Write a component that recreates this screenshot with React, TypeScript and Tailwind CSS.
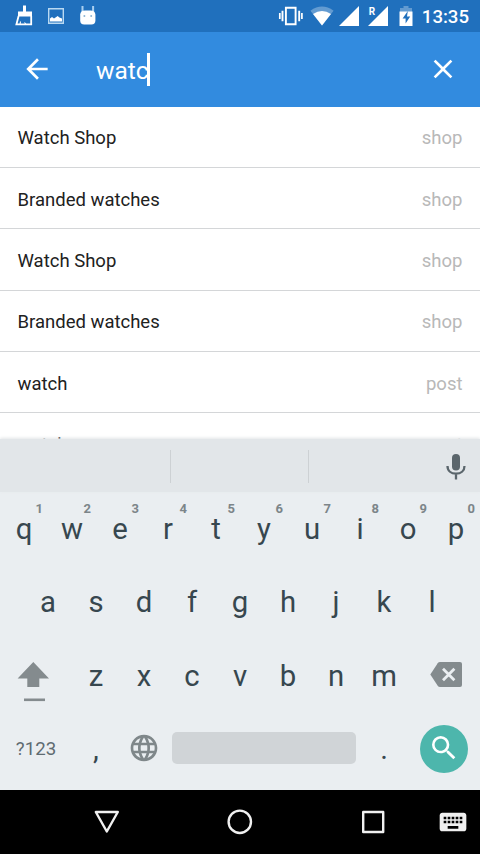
import { MdArrowBack, MdClose, MdKeyboard, MdLanguage, MdSearch } from 'react-icons/md'

const RESULTS = [
  { name: 'Watch Shop', type: 'shop' },
  { name: 'Branded watches', type: 'shop' },
  { name: 'Watch Shop', type: 'shop' },
  { name: 'Branded watches', type: 'shop' },
  { name: 'watch', type: 'post' },
  { name: 'watch', type: 'post' },
]

const TOP_ROW = 'qwertyuiop'.split('')
const HOME_ROW = 'asdfghjkl'.split('')
const BOTTOM_ROW = 'zxcvbnm'.split('')

function StatusBar() {
  return (
    <div className="flex h-8 shrink-0 items-center justify-between bg-[#2070bd] pr-[11px] pl-[14px] text-white">
      <div className="flex items-center">
        {/* Cleaner */}
        <svg width="20" height="22" viewBox="0 0 20 22" fill="none">
          <path d="M9 0.5h3v6h6v5H4v-5h5z" fill="currentColor" />
          <path d="M4.6 11 2.4 19.4h14.8V11" stroke="currentColor" strokeWidth="1.8" />
          <path d="M6 19.5l.5-3M12 19.5l-1.500-2" stroke="currentColor" strokeWidth="1.1" />
        </svg>
        {/* Screenshot */}
        <svg className="ml-[13px]" width="18" height="18" viewBox="0 0 18 18" fill="none">
          <path d="M1.7 1.7h14.6v14.6H1.7z" stroke="#b9d9f2" strokeWidth="1.4" />
          <path d="M3 14.5v-3l2-1.6 2 1.5 1.5-.8 2.2-1.6 1.7 1.6 2.6.9v3z" fill="currentColor" />
        </svg>
        {/* Android head */}
        <svg className="ml-[14px]" width="18" height="20" viewBox="0 0 18 20">
          <path d="M3.5 0v6M14.1 0v6" stroke="#a9cff0" strokeWidth="2" />
          <path d="M1.2 8.500Q1.500 4.500 6 4.500h5.5q4.500 0 4.900 4v6q0 3.800-4 4H5.200q-4-.2-4-4z" fill="currentColor" />
          <circle cx="5.4" cy="10" r="1" fill="#8bb4d4" />
          <circle cx="12.2" cy="10" r="1" fill="#8bb4d4" />
        </svg>
      </div>

      <div className="flex items-center">
        {/* Vibrate */}
        <svg width="26" height="20" viewBox="0 0 26 20" fill="none" stroke="currentColor">
          <path d="M7.9 1.8h9.7v16.4H7.9z" strokeWidth="1.9" />
          <path d="M4.5 4.8v10.4M21.2 4.8v10.4" strokeWidth="1.9" />
          <path d="M1.8 7v6M23.9 7v6" strokeWidth="1.7" />
        </svg>
        {/* Wifi */}
        <svg className="ml-[6px]" width="24" height="20" viewBox="0 0 24 20">
          <path d="M12 19.6.4 4.8Q12-3.6 23.6 4.8z" fill="#fff" fillOpacity=".3" />
          <path d="M12 19.6 3 8Q12 2 21 8z" fill="currentColor" />
        </svg>
        <svg className="ml-[5px]" width="20" height="20" viewBox="0 0 20 20">
          <path d="M20 0v20H0z" fill="currentColor" />
        </svg>
        <div className="relative ml-[9px]">
          <span className="absolute top-[1px] left-[1px] text-[10px] leading-[10px] font-bold">R</span>
          <svg width="20" height="20" viewBox="0 0 20 20">
            <path d="M20 0v20H0L8.5 11.5z" fill="currentColor" />
          </svg>
        </div>
        {/* Battery */}
        <svg className="ml-[11px]" width="14" height="20" viewBox="0 0 14 20">
          <path d="M4.5 0h5v2H13v4H1V2h3.5z" fill="#fff" fillOpacity=".3" />
          <path d="M.5 5.5h13V20H.5z" fill="currentColor" />
          <path d="M8.8 5 3.6 12.4h3v5.2l4.6-7.2H8z" fill="#2070bd" />
        </svg>
        <span className="ml-[9px] pt-[2px] text-[18.6px] leading-[30px] font-medium">13:35</span>
      </div>
    </div>
  )
}

function SearchBar() {
  return (
    <header className="flex h-[74.5px] shrink-0 items-center bg-[#328bdf] px-[21px] text-white">
      <MdArrowBack size={32} />
      <div className="ml-[43px] flex flex-1 items-center">
        <span className="pt-[3px] text-[24.5px] leading-8">watc</span>
        <span className="-ml-[2px] h-[33px] w-[3px] bg-white" />
      </div>
      <MdClose size={32} />
    </header>
  )
}

function Letter({ children, hint }: { children: string; hint?: string }) {
  return (
    <div className="relative flex w-12 items-center justify-center pt-[2px] text-[29.3px] leading-none text-[#37474f]">
      {hint && (
        <span className="absolute top-[10px] right-[5px] text-[13px] font-bold text-[#7c8589]">{hint}</span>
      )}
      {children}
    </div>
  )
}

function Keyboard() {
  return (
    <section className="flex h-[351px] shrink-0 flex-col bg-[#eaeef1]">
      {/* Suggestion strip */}
      <div className="flex h-[53px] items-center bg-[#e2e6e9] pt-[2px] shadow-[0_-1px_3px_#e2e5e7]">
        <div className="h-[33px] w-[171px] border-r border-[#cdd1d4]" />
        <div className="h-[33px] w-[138px] border-r border-[#cdd1d4]" />
        <svg width="20" height="26" viewBox="0 0 20 26" className="mr-[14px] ml-auto text-[#5b666c]" fill="none">
          <rect x="6" y="0" width="8" height="16.5" rx="4" fill="currentColor" />
          <path d="M1.5 12c0 5 3.800 7.700 8.500 7.700s8.500-2.700 8.500-7.700M10 19.500v6" stroke="currentColor" strokeWidth="2.300" />
        </svg>
      </div>

      <div className="grid flex-1 grid-rows-4 pb-[4.5px]">
        <div className="flex">
          {TOP_ROW.map((key, i) => (
            <Letter key={key} hint={String((i + 1) % 10)}>{key}</Letter>
          ))}
        </div>
        <div className="flex justify-center">
          {HOME_ROW.map((key) => (
            <Letter key={key}>{key}</Letter>
          ))}
        </div>
        <div className="flex items-center">
          <div className="flex w-[72px] justify-start pl-[17px]">
            <svg width="33" height="40" viewBox="0 0 33 40" fill="#848b8e" className="mt-[14px]">
              <path d="M16.3 0 32 16.5h-9.7V25H10.3v-8.5H.6z" />
              <path d="M7 36.500h21v2.600H7z" />
            </svg>
          </div>
          <div className="flex self-stretch">
            {BOTTOM_ROW.map((key) => (
              <Letter key={key}>{key}</Letter>
            ))}
          </div>
          <svg width="32" height="25" viewBox="0 0 32 25" className="-mt-[1px] ml-[22px]">
            <path d="M10 0h20q2 0 2 2v21q0 2-2 2H10q-1.5 0-2.300-1.200L.3 12.500 7.700 1.200Q8.500 0 10 0z" fill="#848b8e" />
            <path d="m13 6.800 11.400 11.400M24.400 6.800 13 18.200" stroke="#eaeef1" strokeWidth="2.800" />
          </svg>
        </div>
        <div className="flex items-center">
          <span className="w-[72px] text-center text-[18.7px] text-[#5f6b71]">?123</span>
          <Letter>,</Letter>
          <div className="flex w-12 justify-center">
            <MdLanguage size={32} className="-mt-[1px] text-[#7f878a]" />
          </div>
          <div className="-mt-[1px] ml-[4px] h-[32px] w-[184px] rounded-[5px] bg-[#d0d4d7]" />
          <div className="ml-[4px]">
            <Letter>.</Letter>
          </div>
          <div className="ml-[12px] flex size-12 items-center justify-center rounded-full bg-[#4db6ac] text-white">
            <MdSearch size={32} className="-mt-[2px]" />
          </div>
        </div>
      </div>
    </section>
  )
}

function NavBar() {
  return (
    <nav className="flex h-16 shrink-0 items-center bg-black pl-[94px] text-[#f0f0f0]">
      <svg width="26" height="24" viewBox="0 0 26 24" fill="none" stroke="currentColor" strokeWidth="2.4" strokeLinejoin="round">
        <path d="M1.8 2h22l-11 19.500z" />
      </svg>
      <svg className="ml-[107px]" width="26" height="26" viewBox="0 0 26 26" fill="none" stroke="currentColor" strokeWidth="2.4">
        <circle cx="12.8" cy="12.8" r="11.2" />
      </svg>
      <svg className="ml-[108px]" width="24" height="24" viewBox="0 0 24 24" fill="none" stroke="currentColor" strokeWidth="2.4" strokeLinejoin="round">
        <path d="M2.2 2h20v20h-20z" />
      </svg>
      <MdKeyboard size={32} className="ml-[52px]" />
    </nav>
  )
}

export default function App() {
  return (
    <div className="flex h-[854px] w-[480px] flex-col overflow-hidden bg-white font-[Roboto,sans-serif]">
      <StatusBar />
      <SearchBar />
      <main className="min-h-0 flex-1 overflow-hidden">
        {RESULTS.map((item, i) => (
          <div
            key={i}
            className="flex h-[61.4px] items-center justify-between border-b border-[#d4d6d8] px-[17.5px] pt-[5px] text-[18.5px]"
          >
            <span className="text-[#212121]">{item.name}</span>
            <span className="text-[#b8b8b8]">{item.type}</span>
          </div>
        ))}
      </main>
      <Keyboard />
      <NavBar />
    </div>
  )
}
